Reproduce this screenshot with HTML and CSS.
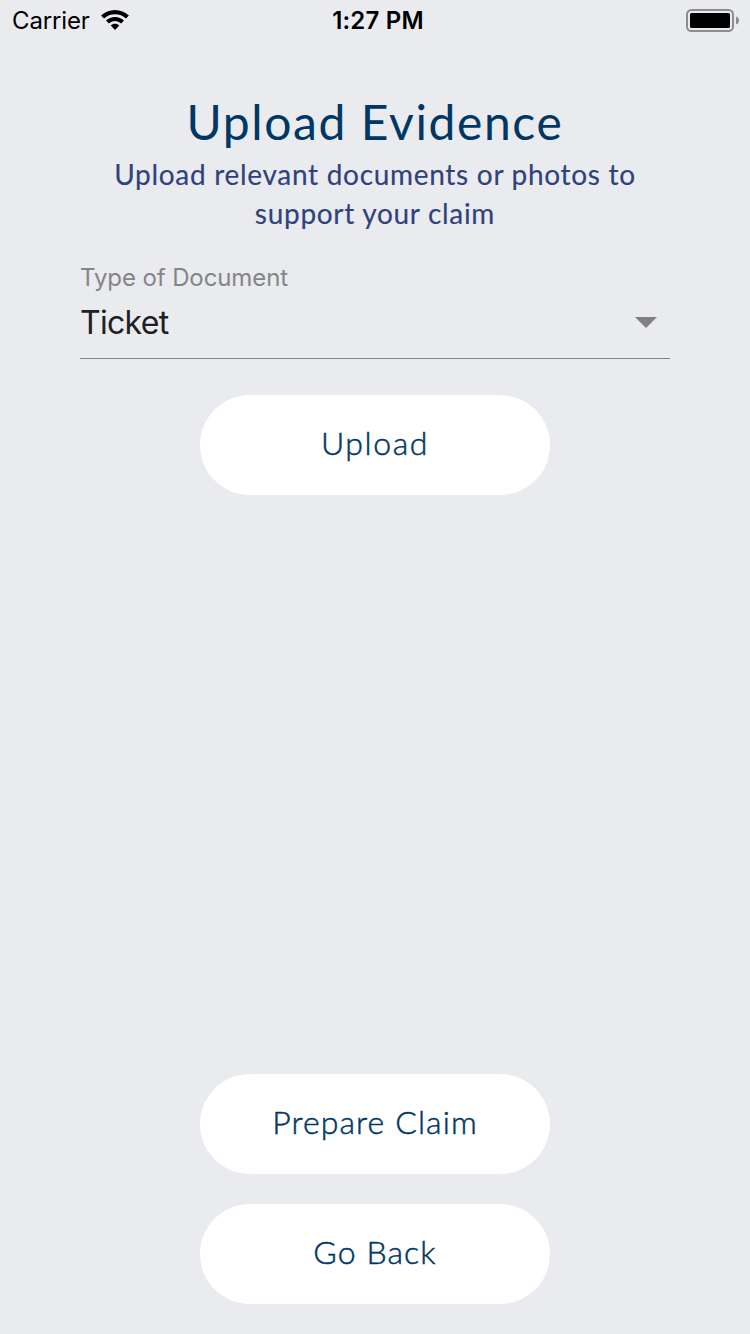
FILE: index.html
```html
<!DOCTYPE html>
<html lang="en">
<head>
<meta charset="utf-8">
<title>Upload Evidence</title>
<link rel="stylesheet" href="styles.css">
</head>
<body>
<div class="screen">
  <header class="status">
    <div class="network">
      <span class="carrier">Carrier</span>
      <svg class="wifi" width="28" height="21" viewBox="0 0 28 21">
        <path d="M14 0C19.300 0 24.200 2.100 27.900 5.600L25 8.600C22 5.800 18.200 4.300 14 4.300S6 5.800 3 8.600L.1 5.600C3.800 2.100 8.700 0 14 0Z"/>
        <path d="M14 6.900C17.400 6.900 20.600 8.200 23 10.500L20.100 13.500C18.400 12 16.300 11.100 14 11.100S9.600 12 7.900 13.500L5 10.500C7.400 8.200 10.600 6.900 14 6.900Z"/>
        <path d="M14 13.800C15.600 13.800 17.100 14.400 18.200 15.500L14 20L9.800 15.500C10.900 14.400 12.400 13.800 14 13.800Z"/>
      </svg>
    </div>
    <span class="time">1:27 PM</span>
    <svg class="battery" width="54" height="24" viewBox="0 0 54 24">
      <rect class="shell" x="1" y="1" width="46" height="21" rx="4.500"/>
      <rect x="4" y="4" width="40" height="15" rx="1.500"/>
      <path class="tip" d="M50 7.500C52.300 8.300 53 10 53 11.500S52.300 14.700 50 15.500Z"/>
    </svg>
  </header>
  <main class="content">
    <h1 class="title">Upload Evidence</h1>
    <p class="subtitle"><span class="line">Upload relevant documents or photos to</span> <span class="line">support your claim</span></p>
    <div class="field">
      <span class="label">Type of Document</span>
      <div class="select">
        <span class="value">Ticket</span>
        <svg class="arrow" width="22" height="11" viewBox="0 0 22 11"><path d="M0 0H22L11 11Z"/></svg>
      </div>
    </div>
    <button class="button upload">Upload</button>
  </main>
  <footer class="actions">
    <button class="button">Prepare Claim</button>
    <button class="button">Go Back</button>
  </footer>
</div>
</body>
</html>
```
FILE: styles.css
```css
* {
  box-sizing: border-box;
}

body {
  margin: 0;
  background: #eaebef;
}

.screen {
  display: flex;
  flex-direction: column;
  height: 1334px;
  font-family: Lato, sans-serif;
}

.status {
  display: grid;
  grid-template-columns: 1fr auto 1fr;
  align-items: center;
  height: 42px;
  padding: 0 10px 0 12px;
  font-family: Inter, sans-serif;
  font-size: 24px;
  line-height: 42px;
}

.network {
  display: flex;
  align-items: center;
  gap: 11px;
}

.carrier {
  letter-spacing: -0.15px;
}

.wifi {
  margin-bottom: 2px;
}

.time {
  padding-left: 4px;
  font-weight: 600;
  letter-spacing: 0.2px;
}

.battery {
  justify-self: end;
}

.shell {
  fill: none;
  stroke: #8c8d90;
  stroke-width: 2;
}

.tip {
  fill: #8c8d90;
}

.content {
  display: flex;
  flex-direction: column;
  align-items: center;
  padding: 0 80px;
}

.title {
  margin: 50px 0 0;
  color: #003764;
  font-size: 48px;
  font-weight: 400;
  line-height: 60px;
  letter-spacing: 1.6px;
  white-space: nowrap;
}

.subtitle {
  margin: 3px 0 0;
  color: #2f427c;
  font-size: 28px;
  font-weight: 400;
  line-height: 39px;
  letter-spacing: 0.7px;
  text-align: center;
  -webkit-text-stroke: 0.15px #2f427c;
}

.line {
  display: block;
  white-space: nowrap;
}

.field {
  width: 590px;
  height: 99px;
  margin: 27px 0 36px;
  border-bottom: 1px solid #808184;
  font-family: Inter, sans-serif;
}

.label {
  display: block;
  color: #858587;
  font-size: 24px;
  line-height: 36px;
  letter-spacing: -0.1px;
}

.select {
  display: flex;
  align-items: center;
  justify-content: space-between;
  padding-right: 13px;
  color: #202022;
  font-size: 32px;
  line-height: 52px;
  letter-spacing: -0.7px;
}

.value {
  height: 52px;
  line-height: 54px;
}

.arrow {
  fill: #808081;
}

.button {
  width: 350px;
  height: 100px;
  padding: 0 0 4px;
  border: 0;
  border-radius: 50px;
  background: #fff;
  color: #003764;
  font-family: Lato, sans-serif;
  font-size: 32px;
  font-weight: 300;
  letter-spacing: 1.1px;
  -webkit-text-stroke: 0.5px #003764;
}

.upload {
  padding-bottom: 5px;
  letter-spacing: 1.6px;
}

.actions {
  display: flex;
  flex-direction: column;
  align-items: center;
  gap: 30px;
  margin-top: auto;
  padding-bottom: 30px;
}

.actions .button {
  padding-bottom: 6px;
}
```
